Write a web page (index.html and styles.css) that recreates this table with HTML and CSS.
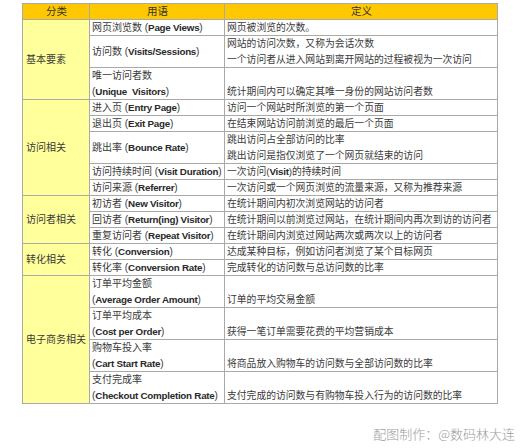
FILE: index.html
```html
<!DOCTYPE html>
<html lang="zh-CN">
<head>
<meta charset="utf-8">
<title>网站分析用语</title>
<link rel="stylesheet" href="styles.css">
</head>
<body>
<div class="page">
<table class="terms">
<colgroup><col class="c1"><col class="c2"><col class="c3"></colgroup>
<thead>
<tr><th>分类</th><th>用语</th><th>定义</th></tr>
</thead>
<tbody>
<tr class="s"><td class="cat" rowspan="3">基本要素</td><td class="term">网页浏览数 (<b>Page Views</b>)</td><td class="def">网页被浏览的次数。</td></tr>
<tr class="d"><td class="term">访问数 (<b>Visits/Sessions</b>)</td><td class="def">网站的访问次数，又称为会话次数<br>一个访问者从进入网站到离开网站的过程被视为一次访问</td></tr>
<tr class="d"><td class="term">唯一访问者数<br>(<b>Unique&nbsp; Visitors</b>)</td><td class="def">统计期间内可以确定其唯一身份的网站访问者数</td></tr>

<tr class="s"><td class="cat" rowspan="5">访问相关</td><td class="term">进入页 (<b>Entry Page</b>)</td><td class="def">访问一个网站时所浏览的第一个页面</td></tr>
<tr class="s"><td class="term">退出页 (<b>Exit Page</b>)</td><td class="def">在结束网站访问前浏览的最后一个页面</td></tr>
<tr class="d"><td class="term">跳出率 (<b>Bounce Rate</b>)</td><td class="def">跳出访问占全部访问的比率<br>跳出访问是指仅浏览了一个网页就结束的访问</td></tr>
<tr class="s"><td class="term">访问持续时间 (<b>Visit Duration</b>)</td><td class="def">一次访问(<b>Visit</b>)的持续时间</td></tr>
<tr class="s"><td class="term">访问来源 (<b>Referrer</b>)</td><td class="def">一次访问或一个网页浏览的流量来源，又称为推荐来源</td></tr>

<tr class="s"><td class="cat" rowspan="3">访问者相关</td><td class="term">初访者 (<b>New Visitor</b>)</td><td class="def">在统计期间内初次浏览网站的访问者</td></tr>
<tr class="s"><td class="term">回访者 (<b>Return(ing) Visitor</b>)</td><td class="def">在统计期间以前浏览过网站，在统计期间内再次到访的访问者</td></tr>
<tr class="s"><td class="term">重复访问者 (<b>Repeat Visitor</b>)</td><td class="def">在统计期间内浏览过网站两次或两次以上的访问者</td></tr>

<tr class="s"><td class="cat" rowspan="2">转化相关</td><td class="term">转化 (<b>Conversion</b>)</td><td class="def">达成某种目标，例如访问者浏览了某个目标网页</td></tr>
<tr class="s"><td class="term">转化率 (<b>Conversion Rate</b>)</td><td class="def">完成转化的访问数与总访问数的比率</td></tr>

<tr class="d"><td class="cat" rowspan="4">电子商务相关</td><td class="term">订单平均金额<br>(<b>Average Order Amount</b>)</td><td class="def">订单的平均交易金额</td></tr>
<tr class="d"><td class="term">订单平均成本<br>(<b>Cost per Order</b>)</td><td class="def">获得一笔订单需要花费的平均营销成本</td></tr>
<tr class="d"><td class="term">购物车投入率<br>(<b>Cart Start Rate</b>)</td><td class="def">将商品放入购物车的访问数与全部访问数的比率</td></tr>
<tr class="d"><td class="term">支付完成率<br>(<b>Checkout Completion Rate</b>)</td><td class="def">支付完成的访问数与有购物车投入行为的访问数的比率</td></tr>
</tbody>
</table>
<div class="credit">配图制作：@数码林大连</div>
</div>
</body>
</html>
```

FILE: styles.css
```css
html, body {
  margin: 0;
  padding: 0;
  background: #ffffff;
}

.page {
  width: 520px;
  height: 448px;
  padding-top: 3px;
  box-sizing: border-box;
  font-family: "Liberation Sans", "Noto Sans CJK SC", sans-serif;
  color: #3a3a3a;
}

.terms {
  margin-left: 22px;
  border-collapse: collapse;
  table-layout: fixed;
  width: 475px;
  font-size: 10px;
}

.c1 { width: 67px; }
.c2 { width: 135px; }
.c3 { width: 273px; }

.terms th,
.terms td {
  border: 1px solid #a9a9a9;
  padding: 0 2px 0 3px;
  line-height: 15px;
  white-space: nowrap;
  overflow: hidden;
}

.terms th {
  background: #ffc800;
  font-weight: normal;
  font-size: 10.5px;
  text-align: center;
  color: #333333;
}

.terms td.cat {
  background: #ffff9c;
  vertical-align: middle;
  text-align: left;
}

.terms td.term {
  vertical-align: middle;
  padding-left: 2px;
}

.terms td.def {
  vertical-align: bottom;
  font-size: 9.8px;
  padding-left: 2px;
}

.terms tr.d td {
  line-height: 15.5px;
}

.terms b {
  font-weight: bold;
  font-size: 9.8px;
  letter-spacing: -0.25px;
  color: #2a2a2a;
}

.credit {
  margin-top: 22px;
  padding-right: 5px;
  text-align: right;
  font-family: "Noto Sans CJK SC", sans-serif;
  font-size: 13px;
  line-height: 16px;
  color: #9c9c9c;
  font-weight: 300;
}
```
